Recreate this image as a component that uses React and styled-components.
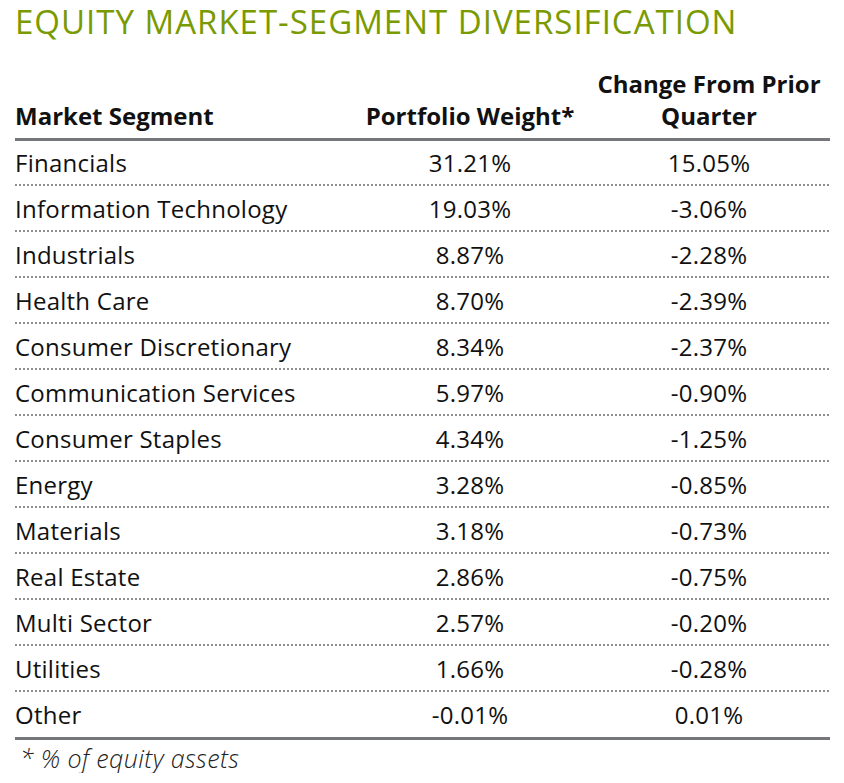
import React from 'react'
import styled, { createGlobalStyle } from 'styled-components'

const GlobalStyle = createGlobalStyle`
  body {
    margin: 0;
    background: #ffffff;
    font-family: "Open Sans", "Noto Sans", sans-serif;
    color: #111111;
  }
`

const rows = [
  ['Financials', '31.21%', '15.05%'],
  ['Information Technology', '19.03%', '-3.06%'],
  ['Industrials', '8.87%', '-2.28%'],
  ['Health Care', '8.70%', '-2.39%'],
  ['Consumer Discretionary', '8.34%', '-2.37%'],
  ['Communication Services', '5.97%', '-0.90%'],
  ['Consumer Staples', '4.34%', '-1.25%'],
  ['Energy', '3.28%', '-0.85%'],
  ['Materials', '3.18%', '-0.73%'],
  ['Real Estate', '2.86%', '-0.75%'],
  ['Multi Sector', '2.57%', '-0.20%'],
  ['Utilities', '1.66%', '-0.28%'],
  ['Other', '-0.01%', '0.01%'],
]

const App = () => {
  return (
    <Page>
      <GlobalStyle />
      <Title>EQUITY MARKET-SEGMENT DIVERSIFICATION</Title>
      <Table>
        <HeadRow>
          <HeadCell>Market Segment</HeadCell>
          <HeadCell center>Portfolio Weight*</HeadCell>
          <HeadCell center>Change From Prior<br />Quarter</HeadCell>
        </HeadRow>
        {rows.map((r, i) => (
          <Row key={r[0]} last={i === rows.length - 1}>
            <Cell>{r[0]}</Cell>
            <Cell center>{r[1]}</Cell>
            <Cell center>{r[2]}</Cell>
          </Row>
        ))}
      </Table>
      <Note>* % of equity assets</Note>
    </Page>
  )
}

const Page = styled.div`
  width: 815px;
  padding: 2px 0 0 15px;
`

const Title = styled.h1`
  margin: 0;
  font-weight: 400;
  font-size: 33px;
  line-height: 40px;
  color: #7a9a01;
  letter-spacing: 1px;
`

const Table = styled.div`
  margin-top: 26px;
`

const HeadRow = styled.div`
  display: grid;
  grid-template-columns: 337px 236px 242px;
  align-items: end;
  border-bottom: 3px solid #76777a;
  padding-bottom: 6px;
`

const HeadCell = styled.div`
  font-weight: 700;
  font-size: 24px;
  line-height: 32px;
  text-align: ${p => (p.center ? 'center' : 'left')};
`

const Row = styled.div`
  display: grid;
  grid-template-columns: 337px 236px 242px;
  align-items: center;
  height: ${p => (p.last ? '47px' : '46px')};
  box-sizing: border-box;
  padding-bottom: ${p => (p.last ? '0' : '3px')};
  background-image: ${p =>
    p.last
      ? 'none'
      : 'repeating-linear-gradient(to right, #8d8e91 0 2px, transparent 2px 4px)'};
  background-size: 100% 2px;
  background-position: left bottom 1px;
  background-repeat: no-repeat;
  border-bottom: ${p => (p.last ? '3px solid #76777a' : 'none')};
`

const Cell = styled.div`
  font-size: 24px;
  line-height: 28px;
  letter-spacing: 0.25px;
  text-align: ${p => (p.center ? 'center' : 'left')};
`

const Note = styled.div`
  font-style: italic;
  font-weight: 300;
  font-size: 25px;
  line-height: 30px;
  letter-spacing: 0.4px;
  color: #222;
  padding-left: 5px;
  margin-top: 3px;
`

export default App
